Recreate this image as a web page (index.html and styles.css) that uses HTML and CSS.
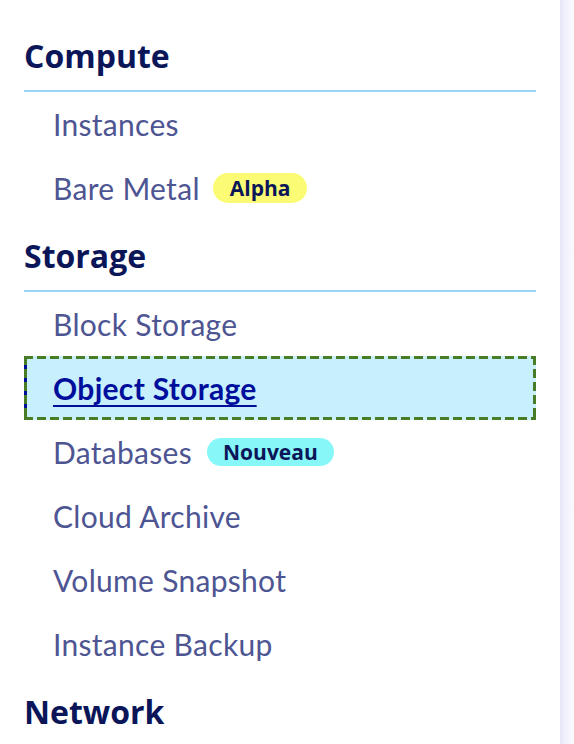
FILE: index.html
```html
<!DOCTYPE html>
<html lang="fr">
<head>
<meta charset="utf-8">
<title>Menu</title>
<link rel="stylesheet" href="styles.css">
</head>
<body>
<div class="page">
  <nav class="sidebar">
    <section class="group">
      <h2 class="heading">Compute</h2>
      <ul class="items">
        <li class="item"><a class="link" href="#">Instances</a></li>
        <li class="item"><a class="link" href="#">Bare Metal</a><span class="badge badge-alpha">Alpha</span></li>
      </ul>
    </section>
    <section class="group">
      <h2 class="heading">Storage</h2>
      <ul class="items">
        <li class="item"><a class="link" href="#">Block Storage</a></li>
        <li class="item item-focus"><a class="link link-active" href="#">Object Storage</a></li>
        <li class="item"><a class="link" href="#">Databases</a><span class="badge badge-new">Nouveau</span></li>
        <li class="item"><a class="link" href="#">Cloud Archive</a></li>
        <li class="item"><a class="link" href="#">Volume Snapshot</a></li>
        <li class="item"><a class="link" href="#">Instance Backup</a></li>
      </ul>
    </section>
    <section class="group">
      <h2 class="heading">Network</h2>
    </section>
  </nav>
  <div class="edge"></div>
</div>
</body>
</html>
```
FILE: styles.css
```css
html, body {
  margin: 0;
  padding: 0;
  background: #ffffff;
}

.page {
  display: flex;
  height: 744px;
  overflow: hidden;
}

.sidebar {
  width: 560px;
  box-sizing: border-box;
  padding: 20px 24px 0 24px;
  flex: none;
}

.edge {
  flex: 1;
  background: linear-gradient(to right, #e7e6f8 0%, #f1f0fb 40%, #fafafe 100%);
}

.group {
  margin: 0;
}

.heading {
  margin: 0;
  box-sizing: border-box;
  height: 72px;
  padding-top: 20px;
  font-family: "Open Sans", "Noto Sans", sans-serif;
  font-weight: 700;
  font-size: 32px;
  line-height: 32px;
  color: #0b1659;
  border-bottom: 2px solid #9dd5f5;
}

.items {
  list-style: none;
  margin: 0;
  padding: 0;
}

.item {
  display: flex;
  align-items: center;
  height: 64px;
  padding-left: 29px;
  box-sizing: border-box;
  font-family: "Lato", "Noto Sans", sans-serif;
  font-size: 30px;
  letter-spacing: 0.3px;
  line-height: 64px;
}

.link {
  color: #4d5592;
  text-decoration: none;
}

.item-focus {
  position: relative;
  background: #c8effc;
  border-left: 3px solid #000e9c;
  padding-left: 26px;
}

.item-focus::after {
  content: "";
  position: absolute;
  top: 0;
  right: 0;
  bottom: 0;
  left: -3px;
  pointer-events: none;
  background:
    repeating-linear-gradient(to right, #4a7c27 0 9px, transparent 9px 13px) left top / 100% 3px no-repeat,
    repeating-linear-gradient(to right, #4a7c27 0 9px, transparent 9px 13px) left bottom / 100% 3px no-repeat,
    repeating-linear-gradient(to bottom, #4a7c27 0 9px, transparent 9px 13px) left top / 3px 100% no-repeat,
    repeating-linear-gradient(to bottom, #4a7c27 0 9px, transparent 9px 13px) right top / 3px 100% no-repeat;
}

.link-active {
  color: #000e9c;
  font-weight: 700;
  text-decoration: underline;
  text-decoration-thickness: 2px;
  text-underline-offset: 5px;
}

.badge {
  display: inline-flex;
  align-items: center;
  height: 28px;
  padding: 0 16px;
  margin-left: 15px;
  border-radius: 14px;
  font-family: "Open Sans", "Noto Sans", sans-serif;
  font-weight: 700;
  font-size: 21px;
  letter-spacing: 0;
  line-height: 28px;
  color: #0b1659;
}

.badge-alpha {
  background: #fbfc74;
  height: 30px;
  border-radius: 15px;
  padding: 0 17px;
  margin-left: 13px;
}

.badge-new {
  background: #88f7f8;
}
```
